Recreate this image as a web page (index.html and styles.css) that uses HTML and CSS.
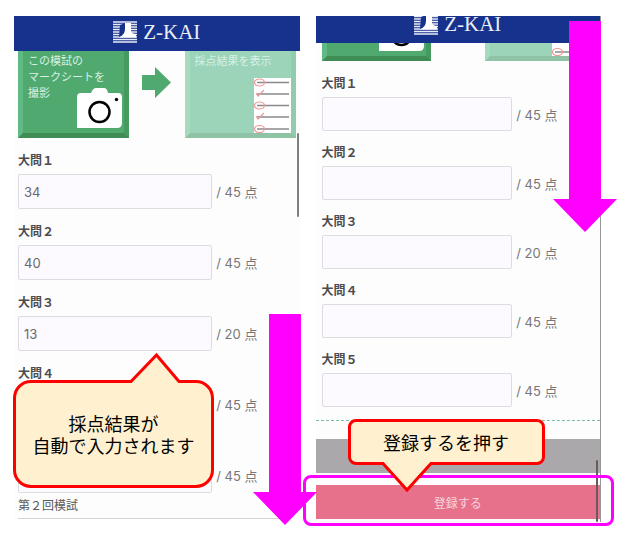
FILE: index.html
```html
<!DOCTYPE html>
<html lang="ja">
  <head>
    <meta charset="utf-8">
    <title>Z-KAI</title>
    <link rel="stylesheet" href="styles.css">
  </head>
  <body>
    <svg class="defs" width="0" height="0" aria-hidden="true">
      <symbol id="logo" viewBox="0 0 24 22">
        <path d="M0 1H24M0 3.500H24M0 6H24M0 8.500H24M0 11H24M0 13.500H24M0 16H24M0 18.500H24M0 21H24" stroke="#e9ecf6" stroke-width="1.300"/>
        <path d="M7 4L12 2V10Q11 14 6 16Z" fill="#16328c"/>
        <path d="M12 2H18V10Q19 13 23 13V16.500H6Q12 14 12 8Z" fill="#fff"/>
      </symbol>
      <symbol id="camera" viewBox="0 0 45 40">
        <path d="M4 5H14Q16 0 19 0H27Q30 0 31 5H41Q45 5 45 9V35Q45 40 40 40H0V9Q0 5 4 5Z" fill="#fff"/>
        <circle cx="22.5" cy="24" r="10" fill="none" stroke="#000" stroke-width="2.5"/>
        <circle cx="39.5" cy="11.5" r="1.7" fill="#000"/>
      </symbol>
      <symbol id="sheet" viewBox="0 0 37 55">
        <path d="M0 0H37V55H0Z" fill="#fff"/>
        <path d="M3 4.5H35M3 16H35M3 27.5H35M3 39H35M3 51H35" stroke="#8b898d" stroke-width="1.6"/>
        <g fill="none" stroke="#ee9a9a" stroke-width="1.2">
          <ellipse cx="5.5" cy="4.5" rx="5" ry="3.5"/>
          <path d="M2 15L4 18L10 12"/>
          <ellipse cx="5.5" cy="27.5" rx="5" ry="3.5"/>
          <path d="M2 38L4 41L10 35"/>
          <ellipse cx="5.5" cy="51" rx="5" ry="3.5"/>
        </g>
      </symbol>
      <symbol id="next" viewBox="0 0 29 31">
        <path d="M0 8H13V0L29 15.5L13 31V23H0Z" fill="#50aa70"/>
      </symbol>
      <symbol id="scroll-arrow" viewBox="0 0 64 211">
        <path d="M16 0H48V178H64L32 211L0 178H16Z" fill="#f0f"/>
      </symbol>
    </svg>

    <main class="screens">
      <section class="phone">
        <header class="header">
          <svg class="logo"><use href="#logo"/></svg>
          <span>Z-KAI</span>
        </header>
        <div class="tiles">
          <a class="tile" href="#">この模試の<br>マークシートを<br>撮影<svg class="camera"><use href="#camera"/></svg></a>
          <svg class="next"><use href="#next"/></svg>
          <a class="tile tile-light" href="#">採点結果を表示<svg class="sheet"><use href="#sheet"/></svg></a>
        </div>
        <form class="scores">
          <div class="field">
            <label for="a1">大問１</label>
            <div class="score"><input id="a1" type="text" value="34"><span>/ 45 点</span></div>
          </div>
          <div class="field">
            <label for="a2">大問２</label>
            <div class="score"><input id="a2" type="text" value="40"><span>/ 45 点</span></div>
          </div>
          <div class="field">
            <label for="a3">大問３</label>
            <div class="score"><input id="a3" type="text" value="13"><span>/ 20 点</span></div>
          </div>
          <div class="field">
            <label for="a4">大問４</label>
            <div class="score"><input id="a4" type="text"><span>/ 45 点</span></div>
          </div>
          <div class="field">
            <label for="a5" aria-label="大問５"></label>
            <div class="score"><input id="a5" type="text" aria-label="大問５"><span>/ 45 点</span></div>
          </div>
        </form>
        <h2 class="exam">第２回模試</h2>

        <div class="scrollbar"></div>
        <svg class="arrow"><use href="#scroll-arrow"/></svg>
        <div class="bubble bubble-auto">
          <svg class="tail" viewBox="0 0 54 31">
            <path d="M1 31L28 3L52 31Z" fill="#fff0cf"/>
            <path d="M1 29.5H3L28.5 3L51 29.5H53" fill="none" stroke="red" stroke-width="3"/>
          </svg>
          採点結果が<br>自動で入力されます
        </div>
      </section>

      <section class="phone phone-scrolled">
        <header class="header">
          <svg class="logo"><use href="#logo"/></svg>
          <span>Z-KAI</span>
        </header>
        <div class="tiles">
          <a class="tile" href="#"><svg class="camera"><use href="#camera"/></svg></a>
          <svg class="next"><use href="#next"/></svg>
          <a class="tile tile-light" href="#"><svg class="sheet"><use href="#sheet"/></svg></a>
        </div>
        <form>
          <div class="scores">
            <div class="field">
              <label for="b1">大問１</label>
              <div class="score"><input id="b1" type="text"><span>/ 45 点</span></div>
            </div>
            <div class="field">
              <label for="b2">大問２</label>
              <div class="score"><input id="b2" type="text"><span>/ 45 点</span></div>
            </div>
            <div class="field">
              <label for="b3">大問３</label>
              <div class="score"><input id="b3" type="text"><span>/ 20 点</span></div>
            </div>
            <div class="field">
              <label for="b4">大問４</label>
              <div class="score"><input id="b4" type="text"><span>/ 45 点</span></div>
            </div>
            <div class="field">
              <label for="b5">大問５</label>
              <div class="score"><input id="b5" type="text"><span>/ 45 点</span></div>
            </div>
          </div>
          <div class="actions">
            <button class="btn btn-back" type="button" aria-label="戻る"></button>
            <button class="btn btn-submit" type="submit">登録する</button>
          </div>
        </form>

        <div class="scrollbar"></div>
        <svg class="arrow"><use href="#scroll-arrow"/></svg>
        <div class="highlight"></div>
        <div class="bubble bubble-press">
          <svg class="tail" viewBox="0 0 54 31">
            <path d="M1 0L27 28L53 0Z" fill="#fff0cf"/>
            <path d="M1 1.5H3L27 28L51 1.5H53" fill="none" stroke="red" stroke-width="3"/>
          </svg>
          登録するを押す
        </div>
      </section>
    </main>
  </body>
</html>
```

FILE: styles.css
```css
* {
  box-sizing: border-box;
}

body {
  margin: 0;
  padding: 16px 37px 8px 14px;
  background: #fff;
  color: #59595b;
  font-family: Inter, "Noto Sans CJK JP", sans-serif;
  font-size: 13px;
}

svg {
  display: block;
}

.defs {
  position: absolute;
}

.screens {
  display: grid;
  grid-template-columns: 1fr 1fr;
  gap: 16px;
  align-items: start;
}

.phone {
  --side: 4px;
  --input-height: 35px;
  --field-gap: 14px;
  position: relative;
  background: #fdfdfd;
}

.phone-scrolled {
  --side: 6px;
  --input-height: 34px;
  --field-gap: 13px;
  padding-bottom: 3px;
  border-right: 1px solid #999;
}

/* header */
.header {
  display: flex;
  justify-content: center;
  align-items: flex-end;
  gap: 6px;
  height: 35px;
  padding-bottom: 8px;
  overflow: hidden;
  background: #16328c;
  color: #eceef6;
  font-family: "Liberation Serif", serif;
  font-size: 21px;
  line-height: 22px;
}

.phone-scrolled .header {
  height: 27px;
}

.logo {
  flex: none;
  width: 24px;
  height: 22px;
}

/* tiles */
.tiles {
  display: grid;
  grid-template-columns: 2fr 1fr 2fr;
  align-content: end;
  height: 87px;
  padding: 0 var(--side);
  overflow: hidden;
}

.phone-scrolled .tiles {
  height: 18px;
}

.tile {
  position: relative;
  height: 87px;
  padding: 2px 0 0 5px;
  border: solid;
  border-width: 0 5px 5px;
  border-color: #459a60 #459a60 #3f8c55 #5fba83;
  background: #50aa70;
  color: #d9f0e2;
  font-size: 11px;
  line-height: 16px;
  text-decoration: none;
  white-space: nowrap;
}

.tile-light {
  border-color: #92ccae #92ccae #90c2a5 #a5dcc0;
  background: #9bd4b8;
  color: #d8f1e5;
}

.camera {
  position: absolute;
  right: 2px;
  bottom: 5px;
  width: 45px;
  height: 40px;
}

.sheet {
  position: absolute;
  right: 0;
  bottom: 0;
  width: 37px;
  height: 55px;
}

.next {
  justify-self: center;
  width: 29px;
  height: 31px;
  margin-top: 16px;
}

/* score form */
.scores {
  display: grid;
  gap: var(--field-gap);
  padding: 14px var(--side) 0;
}

.field label {
  display: block;
  height: 18px;
  margin-bottom: 4px;
  color: #4c4c4e;
  font-size: 12px;
  font-weight: bold;
  line-height: 18px;
}

.score {
  display: flex;
  align-items: center;
  gap: 4px;
  color: #77777a;
  white-space: nowrap;
}

.score input {
  width: 70%;
  height: var(--input-height);
  padding: 0 5px;
  border: 1px solid #dddce0;
  border-radius: 2px;
  background: #fcfaff;
  color: #69696c;
  font: inherit;
}

.exam {
  margin: 0 18px 0 var(--side);
  border-bottom: 1px solid #d5d5d8;
  font-size: 12px;
  font-weight: normal;
  line-height: 25px;
}

.actions {
  display: grid;
  gap: 12px;
  margin-top: 13px;
  padding-top: 18px;
  border-top: 1px dashed #7dbba0;
}

.btn {
  height: 34px;
  border: 0;
  color: #f6d3dc;
  font: inherit;
  font-size: 12px;
}

.btn-back {
  background: #aaa8ab;
}

.btn-submit {
  background: #e7718b;
}

/* scroll positions */
.scrollbar {
  position: absolute;
  top: 117px;
  right: 1px;
  width: 2px;
  height: 84px;
  border-radius: 1px;
  background: #7f7f80;
}

.phone-scrolled .scrollbar {
  top: auto;
  right: 2px;
  bottom: 0;
  height: 62px;
  background: #6a5a60;
}

/* annotations */
.arrow {
  position: absolute;
  z-index: 2;
  top: 298px;
  right: -17px;
  width: 64px;
  height: 211px;
}

.phone-scrolled .arrow {
  top: 5px;
}

.bubble {
  position: absolute;
  z-index: 2;
  display: grid;
  place-content: center;
  border: 3px solid red;
  background: #fff0cf;
  color: #000;
  font-family: "Noto Sans CJK JP", sans-serif;
  font-size: 18px;
  line-height: 22px;
  text-align: center;
  white-space: nowrap;
}

.tail {
  position: absolute;
  width: 54px;
  height: 31px;
}

.bubble-auto {
  top: 364px;
  left: -1px;
  width: 201px;
  height: 108px;
  border-radius: 18px;
}

.bubble-auto .tail {
  bottom: 100%;
  left: 112px;
}

.bubble-press {
  top: 403px;
  left: 32px;
  width: 197px;
  height: 46px;
  border-radius: 8px;
}

.bubble-press .tail {
  top: 100%;
  left: 29px;
}

.highlight {
  position: absolute;
  z-index: 1;
  right: -14px;
  bottom: -4px;
  left: -13px;
  height: 51px;
  border: 3px solid #f0f;
  border-radius: 8px;
}
```
